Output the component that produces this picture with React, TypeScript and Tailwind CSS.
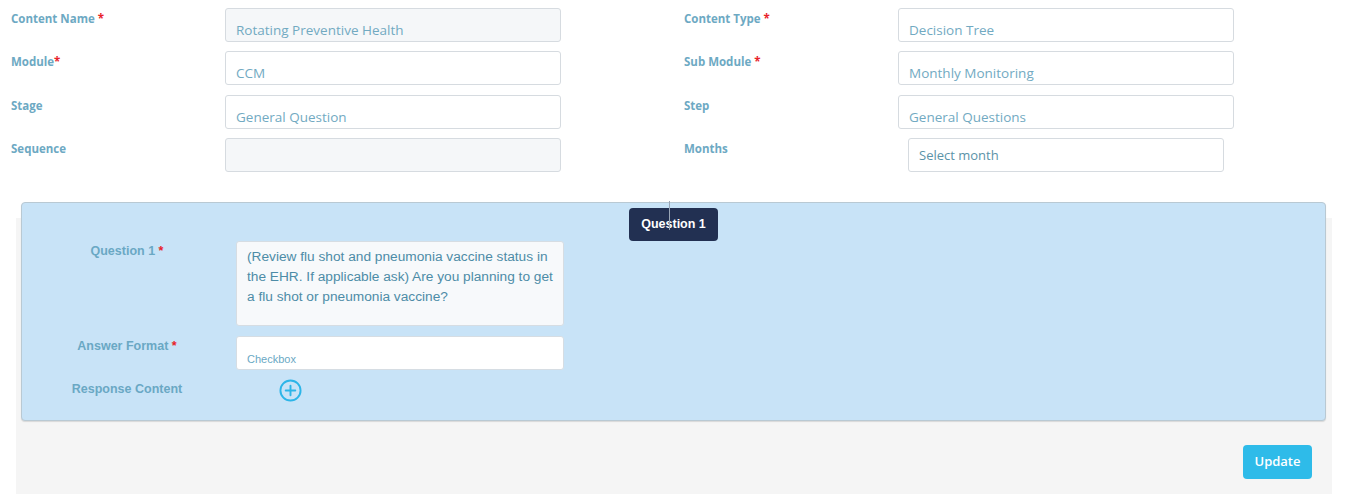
import React from 'react';

const topFont = { fontFamily: '"Open Sans", "Noto Sans", sans-serif' };
const arial = { fontFamily: '"Liberation Sans", Arial, sans-serif' };

type Field = {
    label: string;
    required?: boolean;
    tight?: boolean;
    value: string;
    disabled?: boolean;
    select?: boolean;
};

const leftFields: Field[] = [
    { label: 'Content Name', required: true, value: 'Rotating Preventive Health', disabled: true },
    { label: 'Module', required: true, tight: true, value: 'CCM' },
    { label: 'Stage', value: 'General Question' },
    { label: 'Sequence', value: '', disabled: true },
];

const rightFields: Field[] = [
    { label: 'Content Type', required: true, value: 'Decision Tree' },
    { label: 'Sub Module', required: true, value: 'Monthly Monitoring' },
    { label: 'Step', value: 'General Questions' },
    { label: 'Months', value: 'Select month', select: true },
];

const FieldRow: React.FC<{ f: Field }> = ({ f }) => (
    <div className="flex h-[34px]">
        <div className="w-[214px] pt-[3px] text-[11.5px] leading-[15px] font-bold text-[#6da9c3]">
            {f.label}
            {f.required && <span className="text-[#e8222a]">{f.tight ? '*' : ' *'}</span>}
        </div>
        {f.select ? (
            <div className="ml-[10px] w-[316px] h-[34px] rounded-[3px] border border-[#d6dbe0] bg-white pl-[10px] pt-[1px] flex items-center text-[13px] text-[#5b93a8]">
                {f.value}
            </div>
        ) : (
            <div
                className={`w-[336px] h-[34px] rounded-[3px] border border-[#d6dbe0] pl-[10px] pt-[12px] text-[13.5px] leading-[19px] text-[#72aac2] ${
                    f.disabled ? 'bg-[#f5f7f9]' : 'bg-white'
                }`}
            >
                {f.value}
            </div>
        )}
    </div>
);

export default function App() {
    return (
        <div className="w-[1348px] h-[503px] bg-white overflow-hidden" style={topFont}>
            {/* header fields */}
            <div className="flex pt-[8px]">
                <div className="w-[673px] pl-[11px] flex flex-col gap-y-[9.33px]">
                    {leftFields.map((f) => (
                        <FieldRow key={f.label} f={f} />
                    ))}
                </div>
                <div className="w-[673px] pl-[11px] flex flex-col gap-y-[9.33px]">
                    {rightFields.map((f) => (
                        <FieldRow key={f.label} f={f} />
                    ))}
                </div>
            </div>

            {/* question section */}
            <div className="mt-[46px] ml-[16px] w-[1316px] h-[276px] bg-[#f5f5f5] flex flex-col">
                <div
                    className="-mt-[16px] ml-[5px] w-[1305px] h-[219px] bg-[#c8e3f7] border border-[#b9c9d3] rounded-[4px] shadow-[0_1px_1px_rgba(0,0,0,0.12)] flex flex-col"
                    style={arial}
                >
                    <div className="flex justify-center pt-[5px]">
                        <div className="relative h-[33px] w-[89px] rounded-[4px] bg-[#223052] text-white font-bold text-[12.5px] flex items-center justify-center">
                            Question 1
                            <span className="absolute left-[40px] -top-[7px] h-[29px] w-px bg-[#9aa6b6]" />
                        </div>
                    </div>

                    <div className="flex">
                        <div className="w-[210px] text-center pt-[2px] text-[12.5px] leading-[16px] font-bold text-[#6aa8c4]">
                            Question 1 <span className="text-[#e8222a]">*</span>
                        </div>
                        <div className="ml-[4px] w-[328px] h-[85px] rounded-[3px] border border-[#d6dde3] bg-[#f7f9fb] pl-[10px] pr-[4px] pt-[5px] text-[13.7px] leading-[20px] text-[#4d8ca7]">
                            (Review flu shot and pneumonia vaccine status in the EHR. If applicable ask) Are you planning to get a flu shot or pneumonia vaccine?
                        </div>
                    </div>

                    <div className="flex mt-[10px]">
                        <div className="w-[210px] text-center pt-[2px] text-[12.5px] leading-[16px] font-bold text-[#6aa8c4]">
                            Answer Format <span className="text-[#e8222a]">*</span>
                        </div>
                        <div className="ml-[4px] w-[328px] h-[34px] rounded-[3px] border border-[#d6dde3] bg-white pl-[10px] pt-[15px] text-[11px] leading-[15px] text-[#6aa8c4]">
                            Checkbox
                        </div>
                    </div>

                    <div className="flex mt-[9px]">
                        <div className="w-[210px] text-center pt-[2px] text-[12.5px] leading-[16px] font-bold text-[#6aa8c4]">
                            Response Content
                        </div>
                        <div className="ml-[47px]">
                            <svg width="23" height="23" viewBox="0 0 24 24" fill="none" stroke="#2cb5e8" strokeWidth="2" strokeLinecap="round">
                                <circle cx="12" cy="12" r="10.5" />
                                <path d="M12 7v10M7 12h10" />
                            </svg>
                        </div>
                    </div>
                </div>

                <div className="flex justify-end mt-[24px] pr-[20px]">
                    <button className="h-[34px] w-[69px] rounded-[4px] bg-[#2ebbe9] text-white text-[13px] font-semibold">
                        Update
                    </button>
                </div>
            </div>
        </div>
    );
}
